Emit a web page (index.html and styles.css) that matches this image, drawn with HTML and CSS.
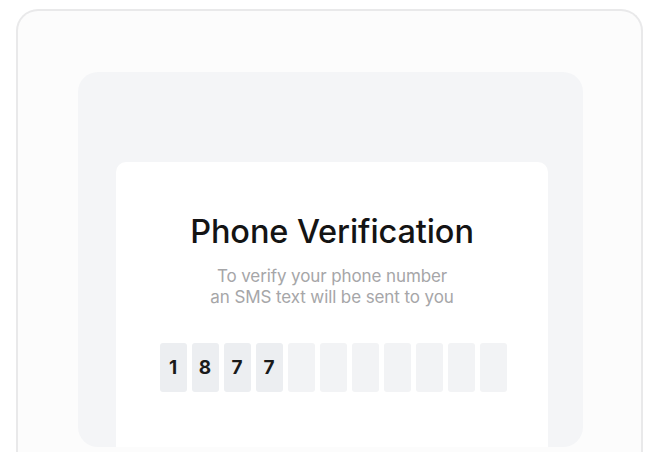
FILE: index.html
```html
<!DOCTYPE html>
<html lang="en">
<head>
<meta charset="utf-8">
<title>Phone Verification</title>
<link rel="stylesheet" href="styles.css">
</head>
<body>
  <div class="frame">
    <div class="panel">
      <div class="card">
        <h1 class="title">Phone Verification</h1>
        <p class="subtitle">To verify your phone number<br>an SMS text will be sent to you</p>
        <div class="code">
          <span class="digit filled">1</span>
          <span class="digit filled">8</span>
          <span class="digit filled">7</span>
          <span class="digit filled">7</span>
          <span class="digit"></span>
          <span class="digit"></span>
          <span class="digit"></span>
          <span class="digit"></span>
          <span class="digit"></span>
          <span class="digit"></span>
          <span class="digit"></span>
        </div>
      </div>
    </div>
  </div>
</body>
</html>
```

FILE: styles.css
```css
html, body {
  margin: 0;
  padding: 0;
  background: #ffffff;
  height: 452px;
  overflow: hidden;
  font-family: Inter, "Open Sans", "Liberation Sans", sans-serif;
}

/* outer device frame, open at the bottom edge */
.frame {
  box-sizing: border-box;
  margin: 9px 0 0 16px;
  width: 627px;
  height: 443px;
  border: 2px solid #e9e9ea;
  border-bottom: 0;
  border-radius: 22px 22px 0 0;
  background: #fcfcfc;
  padding-top: 61px;
}

.panel {
  box-sizing: border-box;
  margin-left: 60px;
  width: 505px;
  height: 375px;
  border-radius: 20px;
  background: #f4f5f7;
  padding-top: 90px;
  overflow: hidden;
}

.card {
  margin-left: 38px;
  width: 432px;
  height: 285px;
  background: #ffffff;
  border-radius: 10px 10px 0 0;
  padding-top: 52px;
  box-sizing: border-box;
  text-align: center;
}

.title {
  margin: 0;
  font-size: 32.5px;
  line-height: 36px;
  font-weight: 500;
  color: #141414;
  letter-spacing: -0.1px;
}

.subtitle {
  margin: 16px 0 0;
  font-size: 17px;
  line-height: 21px;
  color: #a6a6a8;
  letter-spacing: -0.1px;
}

.code {
  margin-top: 35px;
  display: flex;
  justify-content: center;
  gap: 5px;
  padding-left: 2px;
}

.digit {
  width: 27px;
  height: 49px;
  border-radius: 3px;
  background: #f2f3f5;
  display: flex;
  align-items: center;
  justify-content: center;
  font-size: 19px;
  font-weight: 700;
  color: #1a1a1a;
}

.digit.filled {
  background: #eceef1;
}
```
